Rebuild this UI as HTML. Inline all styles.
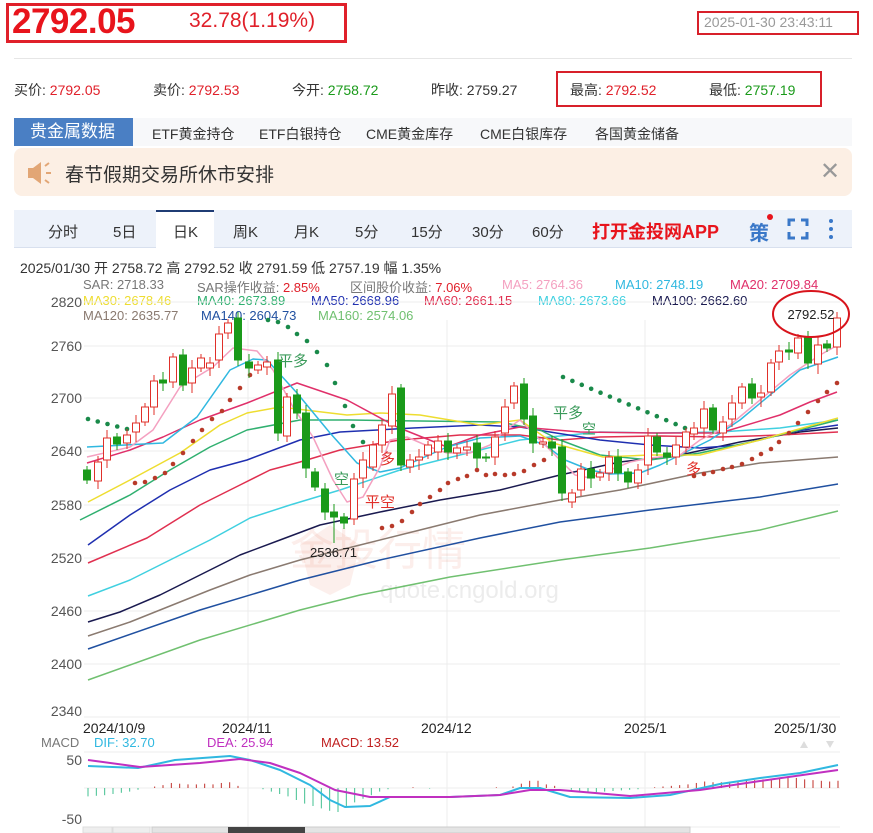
<!DOCTYPE html>
<html><head><meta charset="utf-8">
<style>
*{margin:0;padding:0;box-sizing:border-box}
body{width:873px;height:833px;overflow:hidden;background:#fff;font-family:"Liberation Sans","Noto Sans CJK SC",sans-serif;position:relative;color:#333}
.a{position:absolute;white-space:nowrap}
</style></head><body>
<div class="a" style="left:6px;top:3px;width:341px;height:40px;border:3px solid #e0202a"></div>
<div class="a" style="left:12px;top:2px;font-size:35px;font-weight:bold;color:#e8141c;letter-spacing:-0.5px">2792.05</div>
<div class="a" style="left:189px;top:9px;font-size:21px;color:#e0202a">32.78(1.19%)</div>
<div class="a" style="left:697px;top:11px;width:162px;height:24px;border:2px solid #d8202a"></div>
<div class="a" style="left:704px;top:14px;font-size:14px;color:#999">2025-01-30 23:43:11</div>
<div class="a" style="left:14px;top:58px;width:838px;height:1px;background:#e6e6e6"></div>
<div class="a" style="left:14px;top:80px;font-size:14px">买价: <span style="color:#e0202a">2792.05</span></div>
<div class="a" style="left:153px;top:80px;font-size:14px">卖价: <span style="color:#e0202a">2792.53</span></div>
<div class="a" style="left:292px;top:80px;font-size:14px">今开: <span style="color:#1a9a1a">2758.72</span></div>
<div class="a" style="left:431px;top:80px;font-size:14px">昨收: 2759.27</div>
<div class="a" style="left:556px;top:71px;width:266px;height:36px;border:2px solid #d8202a"></div>
<div class="a" style="left:570px;top:80px;font-size:14px">最高: <span style="color:#e0202a">2792.52</span></div>
<div class="a" style="left:709px;top:80px;font-size:14px">最低: <span style="color:#1a9a1a">2757.19</span></div>
<div class="a" style="left:14px;top:118px;width:838px;height:28px;background:#f7f8fa"></div>
<div class="a" style="left:14px;top:118px;width:119px;height:28px;background:#4a7fc4;color:#fff;font-size:17px;line-height:28px;padding-left:16px">贵金属数据</div>
<div class="a" style="left:152px;top:124px;font-size:14px">ETF黄金持仓</div>
<div class="a" style="left:259px;top:124px;font-size:14px">ETF白银持仓</div>
<div class="a" style="left:366px;top:124px;font-size:14px">CME黄金库存</div>
<div class="a" style="left:480px;top:124px;font-size:14px">CME白银库存</div>
<div class="a" style="left:595px;top:124px;font-size:14px">各国黄金储备</div>
<div class="a" style="left:14px;top:148px;width:838px;height:48px;background:#fcefe4;border-radius:8px"></div>
<svg class="a" style="left:25px;top:160px" width="28" height="26" viewBox="0 0 28 26"><path d="M3 8h5l8-6v22l-8-6H3z" fill="#e2a675"/><path d="M20 6l4-3M21 13h5M20 20l4 3" stroke="#e2a675" stroke-width="2"/></svg>
<div class="a" style="left:65px;top:160px;font-size:19px;color:#333">春节假期交易所休市安排</div>
<div class="a" style="left:820px;top:157px;font-size:24px;color:#999">✕</div>
<div class="a" style="left:14px;top:210px;width:838px;height:38px;background:#edf2fa;border-bottom:1px solid #d8e0ee"></div>
<div class="a" style="left:156px;top:210px;width:58px;height:38px;background:#fff;border-top:2px solid #1f3c74"></div>
<div class="a" style="left:48px;top:221px;font-size:15px">分时</div>
<div class="a" style="left:113px;top:221px;font-size:15px">5日</div>
<div class="a" style="left:173px;top:221px;font-size:15px">日K</div>
<div class="a" style="left:233px;top:221px;font-size:15px">周K</div>
<div class="a" style="left:294px;top:221px;font-size:15px">月K</div>
<div class="a" style="left:355px;top:221px;font-size:15px">5分</div>
<div class="a" style="left:411px;top:221px;font-size:15px">15分</div>
<div class="a" style="left:472px;top:221px;font-size:15px">30分</div>
<div class="a" style="left:532px;top:221px;font-size:15px">60分</div>
<div class="a" style="left:592px;top:218px;font-size:18px;font-weight:bold;color:#e8141c">打开金投网APP</div>
<div class="a" style="left:749px;top:217px;font-size:20px;color:#3a78c8;font-weight:bold">策</div>
<div class="a" style="left:767px;top:214px;width:6px;height:6px;border-radius:3px;background:#e8141c"></div>
<svg class="a" style="left:787px;top:218px" width="22" height="22"><path d="M2 8V2h6M14 2h6v6M20 14v6h-6M8 20H2v-6" stroke="#3a78c8" stroke-width="3" fill="none"/></svg>
<svg class="a" style="left:827px;top:218px" width="8" height="22"><circle cx="4" cy="3" r="2" fill="#3a78c8"/><circle cx="4" cy="11" r="2" fill="#3a78c8"/><circle cx="4" cy="19" r="2" fill="#3a78c8"/></svg>
<div class="a" style="left:20px;top:258px;font-size:14px;color:#333">2025/01/30 开 2758.72 高 2792.52 收 2791.59 低 2757.19 幅 1.35%</div>
<div class="a" style="font-size:13px;left:83px;top:277px;color:#777">SAR: 2718.33</div>
<div class="a" style="font-size:13px;left:197px;top:277px;color:#777">SAR操作收益: <span style="color:#e0202a">2.85%</span></div>
<div class="a" style="font-size:13px;left:350px;top:277px;color:#777">区间股价收益: <span style="color:#e0202a">7.06%</span></div>
<div class="a" style="font-size:13px;left:502px;top:277px;color:#f4a0c0">MA5: 2764.36</div>
<div class="a" style="font-size:13px;left:615px;top:277px;color:#30b8e0">MA10: 2748.19</div>
<div class="a" style="font-size:13px;left:730px;top:277px;color:#e0306a">MA20: 2709.84</div>
<div class="a" style="font-size:13px;left:83px;top:293px;color:#eedd30">MA30: 2678.46</div>
<div class="a" style="font-size:13px;left:197px;top:293px;color:#30b070">MA40: 2673.89</div>
<div class="a" style="font-size:13px;left:311px;top:293px;color:#2030b0">MA50: 2668.96</div>
<div class="a" style="font-size:13px;left:424px;top:293px;color:#e03050">MA60: 2661.15</div>
<div class="a" style="font-size:13px;left:538px;top:293px;color:#40d0e0">MA80: 2673.66</div>
<div class="a" style="font-size:13px;left:652px;top:293px;color:#1a1a50">MA100: 2662.60</div>
<div class="a" style="font-size:13px;left:83px;top:308px;color:#8a7a70">MA120: 2635.77</div>
<div class="a" style="font-size:13px;left:201px;top:308px;color:#2050a0">MA140: 2604.73</div>
<div class="a" style="font-size:13px;left:318px;top:308px;color:#70c070">MA160: 2574.06</div>
<svg class="a" style="left:0;top:0" width="873" height="833" id="ch"></svg>
<script>
var s='';
function L(x1,y1,x2,y2,c,w){s+='<line x1="'+x1+'" y1="'+y1+'" x2="'+x2+'" y2="'+y2+'" stroke="'+c+'" stroke-width="'+(w||1)+'"/>';}
function T(x,y,t,c,f,a){s+='<text x="'+x+'" y="'+y+'" fill="'+c+'" font-size="'+f+'" text-anchor="'+(a||'start')+'" font-family="Liberation Sans,Noto Sans CJK SC,sans-serif">'+t+'</text>';}
var gy=[302,346,398,451,505,558,611,664,717],gl=[2820,2760,2700,2640,2580,2520,2460,2400,2340];
gy.forEach(function(y,i){L(84,y,840,y,'#ececec');T(82,y+5+(i==8?-6:0),gl[i],'#555',14,'end');});
[248,447,645].forEach(function(x){L(x,320,x,722,'#ececec');L(x,752,x,828,'#ececec');});
T(290,565,'金投行情','rgba(230,120,100,0.13)',44);
T(380,598,'quote.cngold.org','rgba(150,150,150,0.18)',24);
s+='<path d="M300 545l30-20 30 20-10 40-20 10-20-10z" fill="rgba(230,120,100,0.12)"/>';
function P(pts,c,w){s+='<polyline fill="none" stroke="'+c+'" stroke-width="'+(w||1.5)+'" stroke-linejoin="round" points="'+pts+'"/>';}
P('88,680 200,640 300,610 360,595 450,577 560,560 650,548 760,530 838,511','#70c070');
P('88,649 200,610 300,580 380,560 480,538 560,522 650,510 760,497 838,484','#2050a0');
P('88,636 130,622 170,606 210,590 250,575 300,560 360,545 420,530 480,515 560,500 620,490 700,473 760,463 838,457','#8a7a70');
P('88,622 120,612 160,595 200,575 240,555 280,540 320,525 380,512 440,500 500,490 560,475 620,462 680,455 740,442 800,432 838,428','#1a1a50');
P('88,596 130,580 170,560 210,540 250,518 290,505 340,490 400,470 460,455 520,440 600,432 660,433 720,432 780,428 838,420','#40d0e0');
P('88,563 147,538 200,505 240,485 270,470 300,462 340,450 400,440 460,435 520,435 560,440 600,437 660,436 720,437 780,435 838,432','#e03050');
P('88,545 130,515 170,490 210,470 247,460 300,440 340,432 413,428 480,425 520,427 550,432 600,440 650,445 700,448 740,445 790,432 838,425','#1f2fb0');
P('80,520 130,495 170,470 210,447 247,430 300,420 350,420 420,421 500,422 540,430 560,440 600,455 650,460 700,453 760,440 838,420','#30b070');
P('88,502 130,480 180,453 220,425 247,413 280,407 347,415 380,413 420,415 480,425 520,420 553,443 603,457 650,455 700,455 760,440 838,418','#eedd30');
P('87,463 130,450 163,437 200,420 247,403 297,383 347,400 397,427 447,447 480,435 520,427 580,432 653,433 720,433 780,415 810,402 837,392','#e0306a');
P('87,447 163,443 197,417 230,370 253,359 267,360 297,393 330,433 357,463 380,472 400,468 447,447 480,438 520,436 545,445 565,460 590,470 610,474 640,473 660,465 690,450 710,440 740,420 770,395 800,370 838,357','#30b8e0');
P('87,457 130,447 153,430 180,387 213,367 233,348 257,351 273,370 293,407 313,437 333,480 347,502 363,497 380,467 390,440 407,437 430,447 447,453 470,453 490,445 505,430 520,420 540,440 555,455 575,475 590,478 610,470 630,462 650,458 680,455 700,440 730,425 760,400 790,375 820,355 838,345','#f4a0c0');
function D(x1,y1,x2,y2,n,c){for(var i=0;i<n;i++){var t=n>1?i/(n-1):0;s+='<circle cx="'+(x1+(x2-x1)*t)+'" cy="'+(y1+(y2-y1)*t)+'" r="2.3" fill="'+c+'"/>';}}
var G='#1a8a4a',R='#b83a2a';
D(88,419,127,429,5,G);
var r1=[[135,483],[145,482],[155,478],[165,473],[173,464],[183,453],[193,441],[202,430],[212,419],[222,411],[230,400],[240,388],[250,375]];r1.forEach(function(p){D(p[0],p[1],0,0,1,R);});
var g2=[[268,320],[278,322],[288,327],[297,334],[307,341],[317,352],[327,365],[335,383],[345,406],[353,426],[363,442],[373,457]];g2.forEach(function(p){D(p[0],p[1],0,0,1,G);});
var r2=[[382,528],[392,526],[402,521],[412,512],[420,504],[430,497],[440,490],[448,483],[458,479],[467,476],[477,470],[486,475],[495,474],[505,475],[514,474],[524,471],[534,465],[544,460]];r2.forEach(function(p){D(p[0],p[1],0,0,1,R);});
D(563,377,685,428,14,G);
var r3=[[694,476],[704,474],[713,472],[723,469],[732,467],[742,464],[752,459],[761,454],[771,449],[779,442],[789,433],[798,423],[808,412],[818,401],[827,392],[837,383]];r3.forEach(function(p){D(p[0],p[1],0,0,1,R);});
var C=[[87,470,480,'g'],[98,462,481,'r'],[107,438,460,'r'],[117,437,444,'g'],[127,435,443,'r'],[136,423,432,'r'],[145,407,422,'r'],[154,381,407,'r'],[163,380,383,'g'],[173,357,382,'r'],[183,355,385,'g'],[192,368,383,'r'],[201,358,368,'r'],[210,363,368,'r'],[219,334,360,'r'],[228,323,333,'r'],[238,318,360,'g'],[249,362,368,'g'],[258,365,370,'r'],[267,362,367,'r'],[278,360,433,'g'],[287,397,436,'r'],[297,395,413,'g'],[306,413,468,'g'],[315,472,487,'g'],[325,489,512,'g'],[334,512,517,'g'],[344,517,523,'g'],[354,479,519,'r'],[363,460,478,'r'],[373,445,467,'r'],[382,425,445,'r'],[392,394,426,'r'],[401,388,465,'g'],[410,460,467,'r'],[419,457,460,'r'],
[428,445,455,'r'],[438,441,452,'r'],[448,441,452,'g'],[457,448,453,'r'],[467,447,450,'r'],[477,443,458,'g'],[486,457,458,'g'],[495,437,457,'r'],[505,407,433,'r'],[514,386,403,'r'],[524,384,419,'g'],[533,416,443,'g'],[543,442,444,'r'],[552,442,448,'g'],[562,447,493,'g'],[572,493,502,'r'],[581,469,490,'r'],[591,469,478,'g'],[600,473,477,'r'],[609,457,473,'r'],[618,457,473,'g'],[628,472,482,'g'],[638,470,483,'r'],[648,436,465,'r'],[657,437,452,'g'],[667,453,457,'g'],[676,445,457,'r'],[686,432,447,'r'],[694,428,434,'r'],[704,409,428,'r'],[713,408,430,'g'],[723,422,433,'r'],[732,403,419,'r'],[742,387,403,'r'],[752,384,398,'g'],[761,393,397,'r'],[771,363,392,'r'],[779,351,362,'r'],[789,350,352,'g'],[798,338,353,'r'],[808,337,363,'g'],[818,345,364,'r'],[827,344,348,'g'],[837,318,347,'r']];
C.forEach(function(c,i){var col=c[3]=='r'?'#e0302a':'#1a9a1a';var ht=c[2]-c[1];var wk=4+(i%3)*2;
L(c[0],c[1]-wk,c[0],c[2]+wk+(i%2)*2,col,1);
s+='<rect x="'+(c[0]-3.5)+'" y="'+c[1]+'" width="7" height="'+Math.max(ht,1)+'" fill="'+(c[3]=='r'?'#fff':col)+'" stroke="'+col+'" stroke-width="1"/>';});
L(334,517,334,543,'#1a9a1a');
T(310,557,'2536.71','#222',13);
s+='<ellipse cx="811" cy="314" rx="38" ry="23" fill="none" stroke="#d8141c" stroke-width="2"/>';
T(811,319,'2792.52','#222',13,'middle');
T(278,366,'平多','#3a9a5a',15);T(334,484,'空','#3a9a5a',15);T(365,507,'平空','#e0302a',15);T(380,464,'多','#e0302a',15);
T(553,418,'平多','#3a9a5a',15);T(582,434,'空','#3a9a5a',14);T(686,474,'多','#e0302a',15);
T(83,733,'2024/10/9','#222',14);T(222,733,'2024/11','#222',14);T(421,733,'2024/12','#222',14);T(624,733,'2025/1','#222',14);T(774,733,'2025/1/30','#222',14);
T(41,747,'MACD','#777',13);T(94,747,'DIF: 32.70','#30b8e0',13);T(207,747,'DEA: 25.94','#c030c0',13);T(321,747,'MACD: 13.52','#c02020',13);
s+='<path d="M800 748l4-7 4 7z" fill="#ddd"/><path d="M826 741l4 7 4-7z" fill="#ddd"/>';
L(84,752,840,752,'#ececec');L(84,788,840,788,'#eee');L(84,827,840,827,'#ececec');
T(82,765,'50','#555',14,'end');T(82,824,'-50','#555',14,'end');
var hb=[-14,-13,-12,-10,-8,-6,-3,0,2,4,7,6,5,5,6,5,7,8,3,0,0,-2,-6,-10,-14,-20,-26,-30,-34,-38,-40,-30,-24,-18,-12,-6,-2,0,0,1,0,-1,0,0,0,0,0,0,0,1,0,2,6,10,10,5,3,0,-3,-5,-6,-7,-6,-5,-4,-3,-2,0,1,2,3,4,5,7,9,8,8,9,10,11,11,12,13,14,15,14,12,11,10,9,10];
var n=hb.length;hb.forEach(function(v,i){if(!v)return;var x=88+i*750/(n-1);L(x,788,x,788-v*0.6*(v<0?1:1.2),v>0?'#c0302a':'#40c090',1);});
P('88,766 138,768 175,760 230,756 250,760 280,770 310,785 330,800 345,807 370,806 390,797 450,797 500,795 520,788 540,788 570,797 630,798 670,795 720,784 760,778 800,773 838,765','#30b8e0',2);
P('88,760 140,767 200,763 240,759 270,763 300,773 335,790 370,797 450,797 500,795 530,790 560,790 630,796 700,790 760,781 838,770','#c030c0',2);
s+='<rect x="83" y="827" width="29" height="6" fill="#eee" stroke="#ddd"/><rect x="113" y="827" width="37" height="6" fill="#eee" stroke="#ddd"/><rect x="152" y="827" width="538" height="6" fill="#e4e4e4" stroke="#ccc"/><rect x="228" y="827" width="77" height="6" fill="#444"/>';
document.getElementById('ch').innerHTML=s;
</script>
</body></html>
